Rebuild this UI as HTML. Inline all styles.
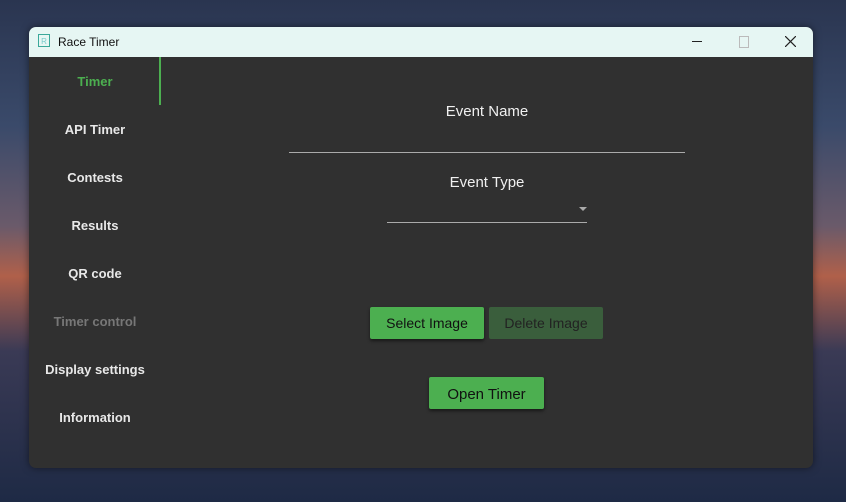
<!DOCTYPE html>
<html><head><style>
body{margin:0;width:846px;height:502px;overflow:hidden;font-family:"Liberation Sans",sans-serif;
background:linear-gradient(180deg,#2a3550 0%,#3a4a6a 25%,#6a5a6a 45%,#b0604a 55%,#3a3a55 70%,#1e2a45 100%);position:relative}
.win{position:absolute;left:29px;top:27px;width:784px;height:441px;border-radius:7px;overflow:hidden;background:#303030;box-shadow:0 0 8px rgba(0,0,0,.5)}
.tb{height:30px;background:#e6f6f3;position:relative;font-size:12px;color:#111}
.tb .ic{position:absolute;left:9px;top:7px;width:12px;height:13px;border:1px solid #3aa89a;font-size:8px;color:#7cc;text-align:center;line-height:13px;box-sizing:border-box}
.tb .t{position:absolute;left:29px;top:8px}
.nav div{position:absolute;width:132px;text-align:center;font-weight:bold;font-size:13px;color:#e8e8e8}
.lbl{position:absolute;color:#f0f0f0;font-size:15px;text-align:center;width:300px}
.btn{position:absolute;border-radius:2px;font-size:14px;text-align:center;line-height:32px;height:32px;box-shadow:0 2px 3px rgba(0,0,0,.5)}
</style></head><body>
<div class="win">
<div class="tb"><div class="ic">R</div><div class="t">Race Timer</div>
<div style="position:absolute;left:663px;top:14px;width:10px;height:1px;background:#222"></div>
<div style="position:absolute;left:710px;top:9px;width:8px;height:10px;border:1px solid #bbb"></div>
<svg style="position:absolute;left:756px;top:9px" width="11" height="11"><path d="M0 0L11 11M11 0L0 11" stroke="#222" stroke-width="1.2"/></svg>
</div>
<div class="nav">
<div style="top:47px;color:#4caf50">Timer</div>
<div style="top:95px">API Timer</div>
<div style="top:143px">Contests</div>
<div style="top:191px">Results</div>
<div style="top:239px">QR code</div>
<div style="top:287px;color:#777">Timer control</div>
<div style="top:335px">Display settings</div>
<div style="top:383px">Information</div>
</div>
<div style="position:absolute;left:130px;top:30px;width:2px;height:48px;background:#4caf50"></div>
<div class="lbl" style="left:308px;top:76px">Event Name</div>
<div style="position:absolute;left:260px;top:125px;width:396px;height:1px;background:#aaa"></div>
<div class="lbl" style="left:308px;top:147px">Event Type</div>
<div style="position:absolute;left:358px;top:195px;width:200px;height:1px;background:#aaa"></div>
<div style="position:absolute;left:550px;top:180px;border-left:4px solid transparent;border-right:4px solid transparent;border-top:4px solid #aaa"></div>
<div class="btn" style="left:341px;top:280px;width:114px;background:#4caf50;color:#111">Select Image</div>
<div class="btn" style="left:460px;top:280px;width:114px;background:#3a5e3c;color:#222;box-shadow:none">Delete Image</div>
<div class="btn" style="left:400px;top:350px;width:115px;background:#4caf50;color:#111;font-size:15px;line-height:35px">Open Timer</div>
</div>
</body></html>
